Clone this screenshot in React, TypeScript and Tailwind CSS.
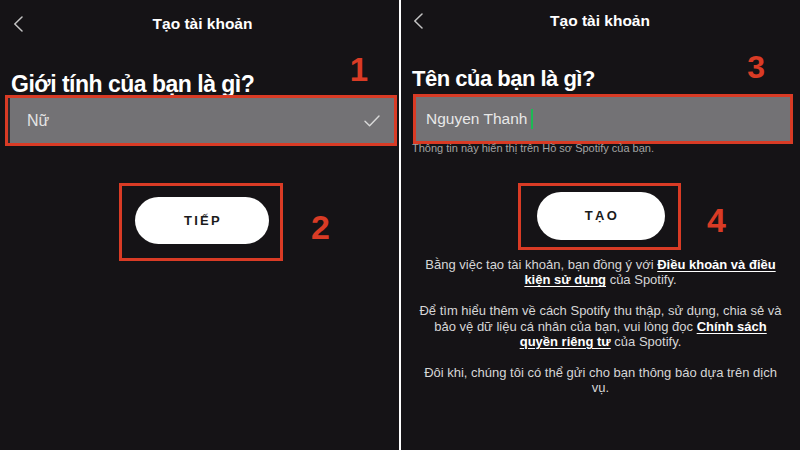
// Spotify sign-up – two annotated steps side by side

const RED = "border-[#d93b25]";

function BackChevron() {
  return (
    <svg width="10" height="16" viewBox="0 0 10 16" className="flex-shrink-0">
      <path d="M9 1 L1.8 8 L9 15" fill="none" stroke="#c4c4c4" strokeWidth="1.5" strokeLinecap="round" strokeLinejoin="round" />
    </svg>
  );
}

function Check() {
  return (
    <svg width="16" height="12" viewBox="0 0 16 12">
      <path d="M1 6.2 L5.6 10.8 L15 1" fill="none" stroke="#dadada" strokeWidth="1.4" strokeLinecap="round" strokeLinejoin="round" />
    </svg>
  );
}

function Header({ top, pl, titleShift }: { top: string; pl: string; titleShift: string }) {
  return (
    <div className={`flex items-center h-[16px] ${top} ${pl}`}>
      <BackChevron />
      <div className={`flex-1 text-center text-[15.5px] leading-[16px] font-bold text-white ${titleShift}`}>
        Tạo tài khoản
      </div>
      <div className="w-[23px]" />
    </div>
  );
}

function PillButton({ label, w, h }: { label: string; w: string; h: string }) {
  return (
    <div className={`${w} ${h} rounded-full bg-white flex items-center justify-center`}>
      <span className="text-[13px] font-bold tracking-[2.3px] text-[#1b1b1b] pl-[2px]">{label}</span>
    </div>
  );
}

export default function App() {
  return (
    <div
      className="w-[800px] h-[450px] flex bg-white overflow-hidden"
      style={{ fontFamily: '"Liberation Sans", Arial, sans-serif' }}
    >
      {/* ── LEFT: gender step ───────────────────── */}
      <div className="w-[399px] h-full bg-[#151316] flex flex-col">
        <Header top="mt-[16px]" pl="pl-[13px]" titleShift="ml-[6px]" />

        <div className="flex justify-between items-start mt-[21px] pl-[11px] pr-[31px]">
          <div className="pt-[19px] text-[23px] leading-[24px] font-bold tracking-[-0.5px] text-white">
            Giới tính của bạn là gì?
          </div>
          <div className="text-[33px] leading-none font-bold text-[#d93b25]">1</div>
        </div>

        <div className={`mt-[-1px] ml-[5px] mr-[2px] h-[51px] border-[3px] ${RED} flex`}>
          <div className="w-[2px] bg-[#2a282b]" />
          <div className="flex-1 bg-[#737275] flex items-center justify-between pl-[17px] pr-[14px]">
            <span className="text-[16px] text-[#e4e4e4]">Nữ</span>
            <Check />
          </div>
        </div>

        <div className="flex items-start mt-[37px] ml-[119px]">
          <div className={`border-[3px] ${RED} pl-[13px] pr-[11px] pt-[11px] pb-[14px]`}>
            <PillButton label="TIẾP" w="w-[134px]" h="h-[47px]" />
          </div>
          <div className="ml-[28px] mt-[27px] text-[34px] leading-none font-bold text-[#d93b25]">2</div>
        </div>
      </div>

      {/* divider */}
      <div className="w-[2px] h-full bg-white" />

      {/* ── RIGHT: name step ────────────────────── */}
      <div className="flex-1 h-full bg-[#151316] flex flex-col">
        <Header top="mt-[13px]" pl="pl-[12px]" titleShift="" />

        <div className="flex justify-between items-start mt-[22px] pl-[11px] pr-[35px]">
          <div className="pt-[16px] text-[22px] leading-[24px] font-bold tracking-[-0.5px] text-white">
            Tên của bạn là gì?
          </div>
          <div className="text-[32px] leading-none font-bold text-[#d93b25]">3</div>
        </div>

        <div className={`mt-[3px] ml-[12px] mr-[7px] h-[50px] border-[3px] ${RED} bg-[#737275] flex items-center pl-[10px]`}>
          <span className="text-[15.5px] text-[#e8e8e8]">Nguyen Thanh</span>
          <div className="ml-[4px] w-[2px] h-[20px] bg-[#1db954]" />
        </div>

        <div className="mt-[-2px] pl-[11px] text-[11px] leading-[12px] text-[#a3a3a3]">
          Thông tin này hiển thị trên Hồ sơ Spotify của bạn.
        </div>

        <div className="flex items-start mt-[29px] ml-[117px]">
          <div className={`border-[3px] ${RED} pl-[16px] pr-[13px] pt-[6px] pb-[7px]`}>
            <PillButton label="TẠO" w="w-[128px]" h="h-[48px]" />
          </div>
          <div className="ml-[26px] mt-[20px] text-[34px] leading-none font-bold text-[#d93b25]">4</div>
        </div>

        <div className="mt-[7px] text-center text-[13px] leading-[15.4px] text-[#d6d6d6]">
          <p>
            Bằng việc tạo tài khoản, bạn đồng ý với{" "}
            <span className="font-bold text-white underline underline-offset-2">Điều khoản và điều</span>
            <br />
            <span className="font-bold text-white underline underline-offset-2">kiện sử dụng</span> của Spotify.
          </p>
          <p className="mt-[15.4px]">
            Để tìm hiểu thêm về cách Spotify thu thập, sử dụng, chia sẻ và
            <br />
            bảo vệ dữ liệu cá nhân của bạn, vui lòng đọc{" "}
            <span className="font-bold text-white underline underline-offset-2">Chính sách</span>
            <br />
            <span className="font-bold text-white underline underline-offset-2">quyền riêng tư</span> của Spotify.
          </p>
          <p className="mt-[15.4px]">
            Đôi khi, chúng tôi có thể gửi cho bạn thông báo dựa trên dịch
            <br />
            vụ.
          </p>
        </div>
      </div>
    </div>
  );
}
